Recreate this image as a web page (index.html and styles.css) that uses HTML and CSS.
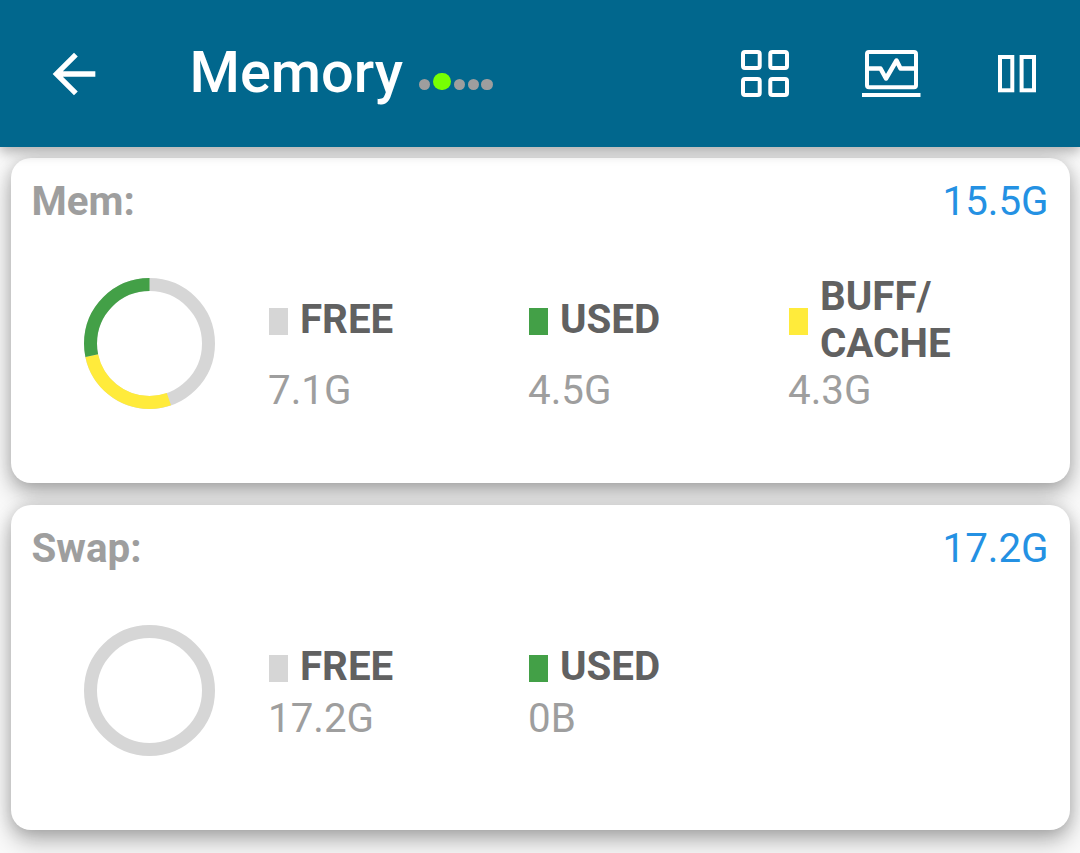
FILE: index.html
```html
<!DOCTYPE html>
<html lang="en">
<head>
<meta charset="utf-8">
<title>Memory</title>
<link rel="stylesheet" href="styles.css">
</head>
<body>
<header class="bar">
  <svg class="back" viewBox="0 0 24 24"><path d="M20 11H7.83l5.59-5.59L12 4l-8 8 8 8 1.41-1.41L7.83 13H20z"/></svg>
  <h1 class="title">Memory</h1>
  <div class="dots"><i></i><i class="active"></i><i></i><i></i><i></i></div>
  <div class="actions">
    <svg width="50" height="50" viewBox="740 49 50 50"><g class="line"><rect x="743" y="52" width="16.7" height="16" rx="2"/><rect x="770.3" y="52" width="16.7" height="16" rx="2"/><rect x="743" y="79" width="16.7" height="16" rx="2"/><rect x="770.3" y="79" width="16.7" height="16" rx="2"/></g></svg>
    <svg width="60" height="50" viewBox="861 49 60 50"><g class="line"><rect x="867" y="52" width="49" height="35.3" rx="2"/><path d="M862 95h58.500"/><path class="pulse" d="M868 68.500H880.500L886 78.500L896.500 60.500L900.500 68.500H915"/></g></svg>
    <svg width="40" height="50" viewBox="997 49 40 50"><g class="line"><rect x="1000" y="57" width="12.300" height="33.300"/><rect x="1021.600" y="57" width="12.400" height="33.300"/></g></svg>
  </div>
</header>
<main class="cards">
  <section class="card">
    <div class="head"><b>Mem:</b><span>15.5G</span></div>
    <div class="body">
      <svg class="ring" viewBox="-65.5 -65.5 131 131"><g transform="rotate(-90)"><circle class="free" r="59"/><circle class="buff" r="59" pathLength="15.9" stroke-dasharray="4.3 11.6" stroke-dashoffset="-7.1"/><circle class="used" r="59" pathLength="15.9" stroke-dasharray="4.5 11.4" stroke-dashoffset="-11.4"/></g></svg>
      <dl class="stats two-line">
        <div><dt><i class="sw free-bg"></i>FREE</dt><dd>7.1G</dd></div>
        <div><dt><i class="sw used-bg"></i>USED</dt><dd>4.5G</dd></div>
        <div><dt><i class="sw buff-bg"></i><span>BUFF/<br>CACHE</span></dt><dd>4.3G</dd></div>
      </dl>
    </div>
  </section>
  <section class="card">
    <div class="head"><b>Swap:</b><span>17.2G</span></div>
    <div class="body">
      <svg class="ring" viewBox="-65.5 -65.5 131 131"><circle class="free" r="59"/></svg>
      <dl class="stats">
        <div><dt><i class="sw free-bg"></i>FREE</dt><dd>17.2G</dd></div>
        <div><dt><i class="sw used-bg"></i>USED</dt><dd>0B</dd></div>
      </dl>
    </div>
  </section>
</main>
</body>
</html>
```
FILE: styles.css
```css
* { box-sizing: border-box; }
body {
  margin: 0;
  height: 853px;
  overflow: hidden;
  background: #fafafa;
  font: 40.300px/47px Roboto, sans-serif;
}
.bar {
  position: relative;
  z-index: 1;
  display: flex;
  align-items: center;
  height: 147px;
  padding: 0 43px 0 41.500px;
  background: #01678d;
  box-shadow: 0 5px 12px rgba(0, 0, 0, .3);
}
.back { width: 64px; height: 64px; fill: #fff; }
.title {
  margin: 0 0 3px 84px;
  width: 213px;
  font-size: 57.700px;
  line-height: 68px;
  font-weight: 500;
  color: #fff;
}
.dots { display: flex; align-items: flex-end; gap: 2.500px; margin: 16px 0 0 16px; }
.dots i { width: 11.200px; height: 11.200px; border-radius: 50%; background: #9e9e9e; }
.dots .active { width: 17.400px; height: 17.400px; margin: 0 1px .500px 1px; background: #76ff03; }
.actions { display: flex; gap: 76px; margin-left: auto; }
.actions svg:nth-child(2) { margin-left: -5px; }
.line { fill: none; stroke: #fff; stroke-width: 4; }
.pulse { stroke-width: 4.500; stroke-linejoin: round; }
.cards { display: flex; flex-direction: column; gap: 22px; padding: 11px 10.500px 0; }
.card {
  height: 325px;
  padding: 20px 21px;
  border-radius: 20px;
  background: #fff;
  box-shadow: 0 12px 24px rgba(0, 0, 0, .26), 0 2px 16px rgba(0, 0, 0, .18);
}
.head { display: flex; justify-content: space-between; color: #9e9e9e; }
.head span { color: #2491e3; }
.body { display: flex; padding: 53px 0 0 52.500px; }
.ring { width: 131px; height: 131px; flex: none; }
.ring circle { fill: none; stroke-width: 13; }
.ring .free { stroke: #d6d6d6; }
.ring .buff { stroke: #ffeb3b; }
.ring .used { stroke: #43a047; }
.stats { display: flex; margin: 15px 0 0 53px; }
.stats.two-line { margin-top: -5px; }
.stats > div { width: 260px; }
.stats dt { display: flex; align-items: center; height: 52px; margin-bottom: 3px; font-weight: 700; color: #616161; }
.two-line dt { height: 92px; margin: 0 0 2px; }
.two-line dt span { padding-top: 2px; }
.stats dd { margin: 0; color: #9e9e9e; }
.sw { width: 19px; height: 27px; margin: 4px 12px 0 1px; }
.free-bg { background: #d6d6d6; }
.used-bg { background: #43a047; }
.buff-bg { background: #ffeb3b; }
```
